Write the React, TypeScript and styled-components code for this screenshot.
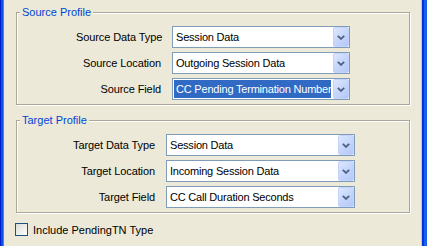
import { Fragment } from "react";
import styled, { createGlobalStyle } from "styled-components";

const GlobalStyle = createGlobalStyle`
  html, body {
    margin: 0;
    padding: 0;
    background: #ece9d8;
  }
  body {
    font-family: "Liberation Sans", Arial, sans-serif;
    font-size: 11px;
  }
`;

const Frame = styled.div`
  display: flex;
  width: 427px;
  height: 246px;
  overflow: hidden;
`;

const LeftEdge = styled.div`
  width: 4px;
  flex: none;
  background: linear-gradient(to right, #0019cf 0 1px, #0855dd 1px 3px, #3d85f0 3px 4px);
`;

const RightEdge = styled.div`
  width: 6px;
  flex: none;
  background: linear-gradient(to right, #c9c7b6 0 1px, #0831d9 1px 3px, #1760ec 3px 6px);
`;

const Client = styled.div`
  flex: 1;
  background: #ece9d8;
  padding: 6px 11px 0 12px;
  display: flex;
  flex-direction: column;
`;

const Group = styled.fieldset`
  margin: 0 0 9px 0;
  padding: 7px 0 4px 0;
  min-width: 0;
  border: 1px solid #aca899;
  box-shadow: inset 1px 1px 0 #fff, 1px 1px 0 #fff;
`;

const Title = styled.legend`
  margin-left: 3px;
  padding: 0 2px;
  line-height: 13px;
  color: #0046d5;
  background: #ece9d8;
`;

const Rows = styled.div<{ $labelW: number; $comboW: number }>`
  display: grid;
  grid-template-columns: ${(p) => p.$labelW}px ${(p) => p.$comboW}px;
  justify-content: center;
  column-gap: 11px;
  row-gap: 4px;
  align-items: center;
`;

const Label = styled.div`
  text-align: right;
  white-space: nowrap;
  color: #000;
  letter-spacing: -0.1px;
`;

const Combo = styled.div`
  height: 22px;
  box-sizing: border-box;
  border: 1px solid #7f9db9;
  background: #fff;
  display: flex;
  align-items: stretch;
`;

const Value = styled.div<{ $selected?: boolean }>`
  flex: 1;
  margin: 1px 2px 1px 1px;
  padding-left: 2px;
  display: flex;
  align-items: center;
  white-space: nowrap;
  overflow: hidden;
  letter-spacing: -0.2px;
  background: ${(p) => (p.$selected ? "#316ac5" : "transparent")};
  color: ${(p) => (p.$selected ? "#fff" : "#000")};
`;

const DropButton = styled.div`
  width: 16px;
  flex: none;
  box-sizing: border-box;
  border: 1px solid #c3d3fd;
  border-radius: 2px;
  background: linear-gradient(135deg, #dde7fd 0%, #c6d6fb 50%, #b4c8f6 100%);
  display: flex;
  align-items: center;
  justify-content: center;
`;

const CheckRow = styled.label`
  display: flex;
  align-items: center;
  gap: 5px;
  margin: 1px 0 0 -1px;
  color: #000;
`;

const CheckBox = styled.span`
  width: 13px;
  height: 13px;
  box-sizing: border-box;
  border: 1px solid #1c5180;
  background: linear-gradient(135deg, #dcdcd7 0%, #f4f4f0 70%, #fff 100%);
`;

function Chevron() {
  return (
    <svg width="8" height="5" viewBox="0 0 8 5">
      <polyline points="0.8,0.8 4,3.9 7.2,0.8" fill="none" stroke="#4d6185" strokeWidth="1.8" />
    </svg>
  );
}

type Field = { label: string; value: string; selected?: boolean };

function ComboField({ value, selected }: { value: string; selected?: boolean }) {
  return (
    <Combo>
      <Value $selected={selected}>{value}</Value>
      <DropButton>
        <Chevron />
      </DropButton>
    </Combo>
  );
}

function Profile({ title, fields, labelW, comboW }: { title: string; fields: Field[]; labelW: number; comboW: number }) {
  return (
    <Group>
      <Title>{title}</Title>
      <Rows $labelW={labelW} $comboW={comboW}>
        {fields.map((f) => (
          <Fragment key={f.label}>
            <Label>{f.label}</Label>
            <ComboField value={f.value} selected={f.selected} />
          </Fragment>
        ))}
      </Rows>
    </Group>
  );
}

const source: Field[] = [
  { label: "Source Data Type", value: "Session Data" },
  { label: "Source Location", value: "Outgoing Session Data" },
  { label: "Source Field", value: "CC Pending Termination Number", selected: true },
];

const target: Field[] = [
  { label: "Target Data Type", value: "Session Data" },
  { label: "Target Location", value: "Incoming Session Data" },
  { label: "Target Field", value: "CC Call Duration Seconds" },
];

export default function App() {
  return (
    <>
      <GlobalStyle />
      <Frame>
        <LeftEdge />
        <Client>
          <Profile title="Source Profile" fields={source} labelW={85} comboW={178} />
          <Profile title="Target Profile" fields={target} labelW={84} comboW={189} />
          <CheckRow>
            <CheckBox />
            Include PendingTN Type
          </CheckRow>
        </Client>
        <RightEdge />
      </Frame>
    </>
  );
}
